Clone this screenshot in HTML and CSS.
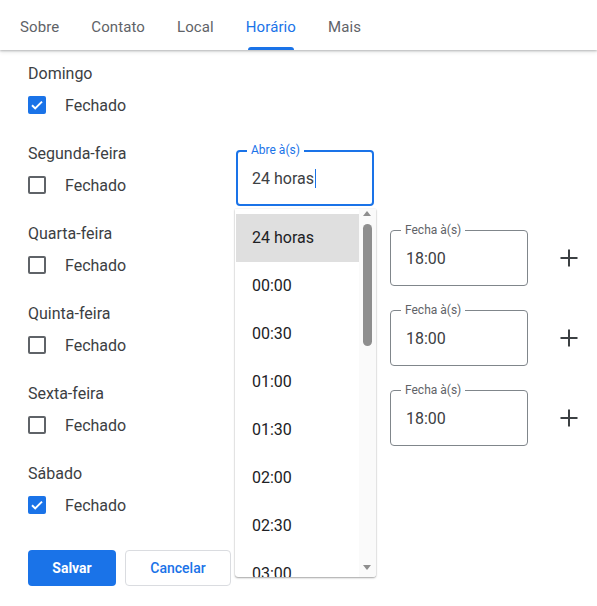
FILE: index.html
```html
<!DOCTYPE html>
<html lang="pt">
<head>
<meta charset="utf-8">
<title>Horário</title>
<link rel="stylesheet" href="styles.css">
</head>
<body>
<nav class="tabs">
  <div class="tab">Sobre</div>
  <div class="tab">Contato</div>
  <div class="tab">Local</div>
  <div class="tab active"><span class="tab-label">Horário</span></div>
  <div class="tab">Mais</div>
</nav>

<main class="content">
  <div class="day">
    <div class="day-left">
      <div class="day-name">Domingo</div>
      <label class="check"><span class="box checked"><svg viewBox="0 0 18 18" width="18" height="18"><path d="M4 9.2l3.2 3.2L14 5.6" fill="none" stroke="#fff" stroke-width="2"/></svg></span><span class="check-text">Fechado</span></label>
    </div>
  </div>

  <div class="day">
    <div class="day-left">
      <div class="day-name">Segunda-feira</div>
      <label class="check"><span class="box"></span><span class="check-text">Fechado</span></label>
    </div>
    <div class="fields">
      <div class="field focused">
        <span class="field-label">Abre à(s)</span>
        <span class="field-value">24 horas<span class="caret"></span></span>
        <div class="dropdown">
          <ul class="options">
            <li class="option selected">24 horas</li>
            <li class="option">00:00</li>
            <li class="option">00:30</li>
            <li class="option">01:00</li>
            <li class="option">01:30</li>
            <li class="option">02:00</li>
            <li class="option">02:30</li>
            <li class="option">03:00</li>
          </ul>
          <div class="scrollbar">
            <span class="arrow up"></span>
            <span class="thumb"></span>
            <span class="arrow down"></span>
          </div>
        </div>
      </div>
    </div>
  </div>

  <div class="day">
    <div class="day-left">
      <div class="day-name">Quarta-feira</div>
      <label class="check"><span class="box"></span><span class="check-text">Fechado</span></label>
    </div>
    <div class="fields">
      <div class="field-slot"></div>
      <div class="field"><span class="field-label">Fecha à(s)</span><span class="field-value">18:00</span></div>
      <button class="add" aria-label="Adicionar"><svg viewBox="0 0 24 24" width="24" height="24"><path d="M12 3.5v17M3.5 12h17" stroke="#3c4043" stroke-width="2" fill="none"/></svg></button>
    </div>
  </div>

  <div class="day">
    <div class="day-left">
      <div class="day-name">Quinta-feira</div>
      <label class="check"><span class="box"></span><span class="check-text">Fechado</span></label>
    </div>
    <div class="fields">
      <div class="field-slot"></div>
      <div class="field"><span class="field-label">Fecha à(s)</span><span class="field-value">18:00</span></div>
      <button class="add" aria-label="Adicionar"><svg viewBox="0 0 24 24" width="24" height="24"><path d="M12 3.5v17M3.5 12h17" stroke="#3c4043" stroke-width="2" fill="none"/></svg></button>
    </div>
  </div>

  <div class="day">
    <div class="day-left">
      <div class="day-name">Sexta-feira</div>
      <label class="check"><span class="box"></span><span class="check-text">Fechado</span></label>
    </div>
    <div class="fields">
      <div class="field-slot"></div>
      <div class="field"><span class="field-label">Fecha à(s)</span><span class="field-value">18:00</span></div>
      <button class="add" aria-label="Adicionar"><svg viewBox="0 0 24 24" width="24" height="24"><path d="M12 3.5v17M3.5 12h17" stroke="#3c4043" stroke-width="2" fill="none"/></svg></button>
    </div>
  </div>

  <div class="day">
    <div class="day-left">
      <div class="day-name">Sábado</div>
      <label class="check"><span class="box checked"><svg viewBox="0 0 18 18" width="18" height="18"><path d="M4 9.2l3.2 3.2L14 5.6" fill="none" stroke="#fff" stroke-width="2"/></svg></span><span class="check-text">Fechado</span></label>
    </div>
  </div>

  <div class="actions">
    <button class="btn primary">Salvar</button>
    <button class="btn secondary">Cancelar</button>
  </div>
</main>
</body>
</html>
```

FILE: styles.css
```css
* { box-sizing: border-box; }

body {
  margin: 0;
  font-family: Roboto, "Liberation Sans", Arial, sans-serif;
  color: #3c4043;
  background: #fff;
}

.tabs {
  display: flex;
  height: 50px;
  padding-left: 4px;
  box-shadow: 0 1px 2px rgba(60,64,67,.3), 0 2px 4px rgba(60,64,67,.12);
  position: relative;
  z-index: 1;
}

.tab {
  padding: 3px 16px 0;
  font-size: 15px;
  letter-spacing: 0.1px;
  color: #5f6368;
  display: flex;
  align-items: center;
  height: 50px;
}

.tab.active { color: #1a73e8; }

.tab-label {
  position: relative;
  display: flex;
  align-items: center;
  height: 100%;
}

.tab-label::after {
  content: "";
  position: absolute;
  left: 2px;
  right: 2px;
  bottom: 0;
  height: 3px;
  border-radius: 3px 3px 0 0;
  background: #1a73e8;
}

.content {
  padding: 11px 0 0 28px;
}

.day {
  display: flex;
  padding-bottom: 16px;
  height: 80px;
}

.day-left {
  width: 208px;
  flex: none;
}

.day-name {
  font-size: 16px;
  line-height: 26px;
  height: 24px;
}

.check {
  display: flex;
  align-items: center;
  height: 40px;
  gap: 19px;
}

.box {
  width: 18px;
  height: 18px;
  border: 2px solid #5f6368;
  border-radius: 2px;
  flex: none;
  display: block;
}

.box.checked {
  border: none;
  background: #1a73e8;
}

.box svg { display: block; }

.check-text {
  font-size: 16px;
  color: #3c4043;
}

.fields {
  display: flex;
  align-items: center;
  gap: 16px;
  margin-top: 9px;
  height: 56px;
}

.field-slot {
  width: 138px;
  height: 56px;
  flex: none;
}

.field {
  position: relative;
  width: 138px;
  height: 56px;
  flex: none;
  border: 1px solid #80868b;
  border-radius: 4px;
  display: flex;
  align-items: center;
  padding-left: 15px;
}

.field.focused {
  border: 2px solid #1a73e8;
  padding-left: 14px;
  z-index: 2;
}

.field-label {
  position: absolute;
  top: -8px;
  left: 10px;
  padding: 0 4px;
  background: #fff;
  font-size: 12px;
  line-height: 14px;
  color: #5f6368;
}

.field.focused .field-label {
  top: -9px;
  left: 9px;
  color: #1a73e8;
}

.field-value {
  font-size: 16px;
  color: #3c4043;
  display: flex;
  align-items: center;
  padding-top: 1px;
}

.caret {
  display: inline-block;
  width: 1.5px;
  height: 19px;
  background: #1a73e8;
  margin-left: 1px;
}

.add {
  border: none;
  background: none;
  padding: 0;
  width: 40px;
  height: 40px;
  margin-left: 5px;
  display: flex;
  align-items: center;
  justify-content: center;
  cursor: pointer;
}

.dropdown {
  position: absolute;
  top: 57px;
  left: -3px;
  width: 141px;
  height: 368px;
  background: #fff;
  box-shadow: 0 1px 2px rgba(0,0,0,.35), 0 0 1px rgba(0,0,0,.2);
  border-radius: 0 0 3px 3px;
  display: flex;
  overflow: hidden;
}

.options {
  list-style: none;
  margin: 0;
  padding: 5px 0 0 1px;
  flex: 1;
}

.option {
  height: 48px;
  line-height: 48px;
  padding-left: 16px;
  font-size: 16px;
  color: #202124;
}

.option.selected { background: #dfdfdf; }

.scrollbar {
  width: 17px;
  flex: none;
  background: #fafafa;
  position: relative;
}

.arrow {
  position: absolute;
  left: 4px;
  width: 0;
  height: 0;
  border-left: 4.5px solid transparent;
  border-right: 4.5px solid transparent;
}

.arrow.up {
  top: 2px;
  border-bottom: 5px solid #8e8e8e;
}

.arrow.down {
  bottom: 7px;
  border-top: 5px solid #8e8e8e;
}

.thumb {
  position: absolute;
  top: 15px;
  left: 4px;
  width: 9px;
  height: 122px;
  border-radius: 5px;
  background: #8e8e8e;
}

.actions {
  display: flex;
  gap: 9px;
  margin-top: 9px;
}

.btn {
  height: 36px;
  border-radius: 4px;
  font-family: Roboto, "Liberation Sans", Arial, sans-serif;
  font-size: 14px;
  font-weight: 500;
  cursor: pointer;
}

.btn.primary {
  width: 88px;
  background: #1a73e8;
  color: #fff;
  border: none;
  font-weight: 700;
}

.btn.secondary {
  width: 106px;
  background: #fff;
  color: #1a73e8;
  border: 1px solid #dadce0;
}
```
